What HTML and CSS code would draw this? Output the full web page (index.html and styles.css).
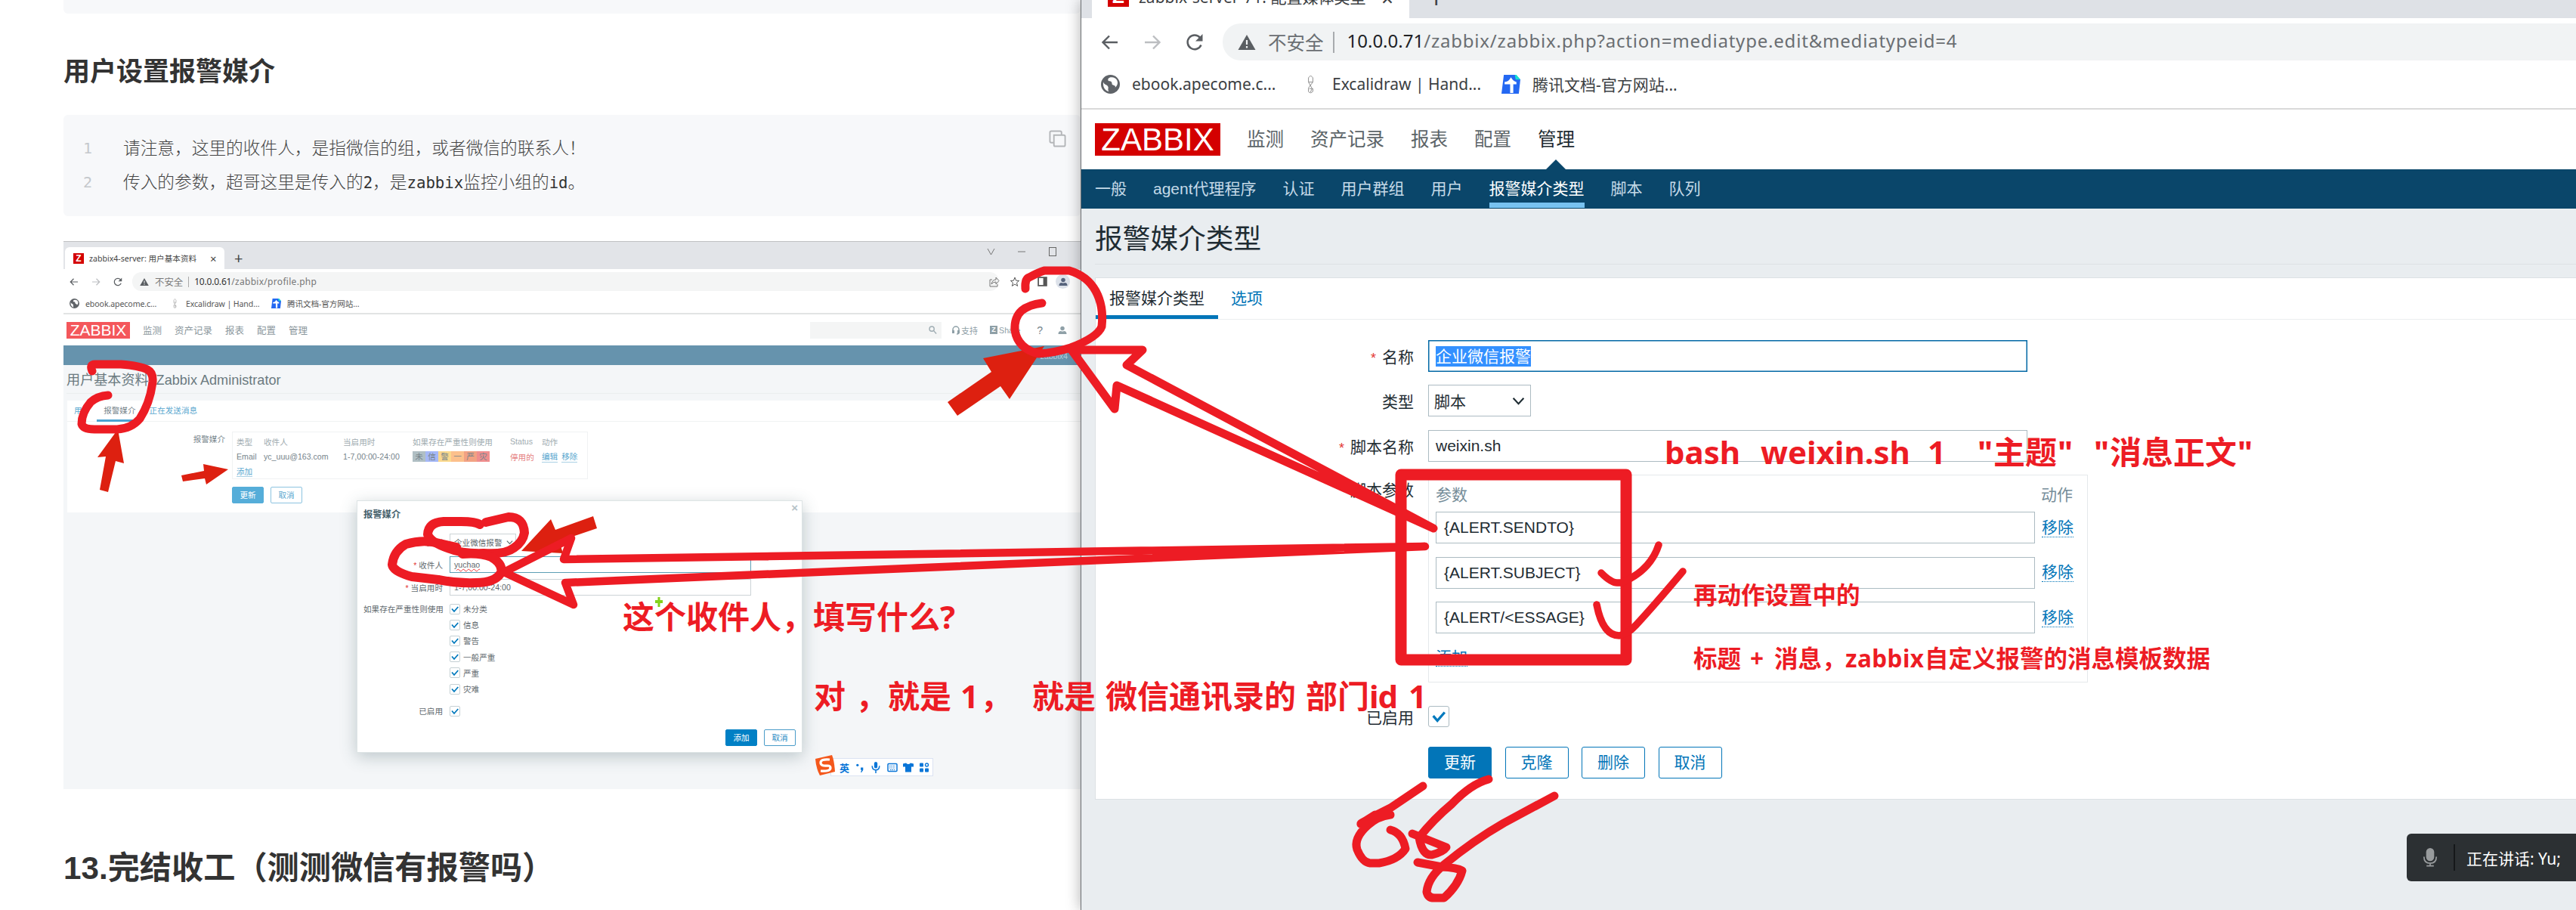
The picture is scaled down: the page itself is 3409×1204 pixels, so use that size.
FILE: index.html
```html
<!DOCTYPE html>
<html lang="zh-CN">
<head>
<meta charset="utf-8">
<title>报警媒介类型</title>
<link rel="stylesheet" href="styles.css">
</head>
<body>
<svg class="defs" width="0" height="0">
  <symbol id="i-back" viewBox="0 0 24 24"><path d="M22 12H3M11 3.5 2.5 12l8.500 8.500" fill="none" stroke="currentColor" stroke-width="2.400"/></symbol>
  <symbol id="i-fwd" viewBox="0 0 24 24"><path d="M2 12h19M13 3.500 21.500 12 13 20.500" fill="none" stroke="currentColor" stroke-width="2.400"/></symbol>
  <symbol id="i-reload" viewBox="0 0 24 24"><path d="M20.500 15.500A9.300 9.300 0 1 1 19 5.800" fill="none" stroke="currentColor" stroke-width="2.500"/><path d="M22.500 1v9.500H13z" fill="currentColor"/></symbol>
  <symbol id="i-warn" viewBox="0 0 24 24"><path d="M12 2 23.500 22H.5z" fill="currentColor"/><path d="M12 9v6M12 17v2.600" stroke="#f1f3f4" stroke-width="2.200"/></symbol>
  <symbol id="i-globe" viewBox="0 0 24 24"><circle cx="12" cy="12" r="12" fill="#5f6368"/><path d="M3 9c1 4 5 3 6 6 1 2-1 3 1 6-5-1-8-6-7-12zM12 3c-3 1-4 3-2 5 3 0 4 1 4 4 2 2 5 1 4 4 4-3 4-8 1-11-2-2-4-2-7-2z" fill="#fff"/></symbol>
  <symbol id="i-pen" viewBox="0 0 12 26"><path d="M6 1 3 4v6l5 9-3 6-2-2V18l6-8V4zM3 10h6M4 19h5v4l-3 2" fill="none" stroke="#8b8b8b" stroke-width="1"/></symbol>
  <symbol id="i-doc" viewBox="0 0 24 24"><path d="M3 0h15l6 6-2 18H0z" fill="#2468f2"/><path d="M17 0h2l5 6h-6z" fill="#18e0d0"/><path d="M4 9q5 0 8-6 3 5 7 6v3h-4v11h-4V12H4z" fill="#fff"/></symbol>
  <symbol id="i-user" viewBox="0 0 24 24"><circle cx="12" cy="7" r="5.500" fill="currentColor"/><path d="M1 22q0-8 7-8 4 2 8 0 7 0 7 8z" fill="currentColor"/></symbol>
  <symbol id="i-tick" viewBox="0 0 24 24"><path d="m4 11 6 7L20.500 6" fill="none" stroke="#0079bd" stroke-width="3.600"/></symbol>
  <symbol id="i-chev" viewBox="0 0 16 16"><path d="m1.500 4.500 6.500 7 6.500-7" fill="none" stroke="currentColor" stroke-width="2"/></symbol>
</svg>

<main class="screen">
  <article class="doc">
    <div class="code code-tail"></div>
    <h2 class="doc-h2">用户设置报警媒介</h2>
    <div class="code">
      <div class="line"><i>1</i><span>请注意，这里的收件人，是指微信的组，或者微信的联系人！</span></div>
      <div class="line"><i>2</i><span>传入的参数，超哥这里是传入的<b>2</b>，是<b>zabbix</b>监控小组的<b>id</b>。</span></div>
      <svg class="copy" viewBox="0 0 24 24"><rect x="1.500" y="1.500" width="16" height="16" rx="2"/><path d="M7 7h13.500q2 0 2 2v11.500q0 2-2 2H9q-2 0-2-2z"/></svg>
    </div>

    <section class="shot">
      <div class="s-strip">
        <div class="s-tab"><span class="zfav">Z</span><span class="s-tabtext">zabbix4-server: 用户基本资料</span><span class="s-x">×</span></div>
        <span class="s-plus">+</span>
        <svg class="s-win" viewBox="0 0 100 16"><path d="m5 4 4.500 8L14 4M45 8h10" fill="none" stroke="#777"/><rect x="86.500" y="2.500" width="9" height="11" fill="none" stroke="#666"/></svg>
      </div>
      <div class="s-bar">
        <svg class="ic12 dk"><use href="#i-back"/></svg>
        <svg class="ic12 lt"><use href="#i-fwd"/></svg>
        <svg class="ic12 dk"><use href="#i-reload"/></svg>
        <div class="s-omni"><svg class="ic12 dk"><use href="#i-warn"/></svg><span class="s-safe">不安全</span><u></u><span class="s-url"><em>10.0.0.61</em>/zabbix/profile.php</span>
          <svg class="s-share" viewBox="0 0 40 14"><path d="M4 4H1v9h10v-3M3 10q1-6 6-6V1l4 4.500L9 10V7Q5 7 3 10z" fill="none" stroke="#777"/><path d="m34 1 1.600 4.200 4 .2-3.100 2.700 1.100 4.300L34 10l-3.600 2.400 1.100-4.300-3.100-2.700 4-.2z" fill="none" stroke="#555"/></svg>
        </div>
        <svg class="s-panel" viewBox="0 0 12 12"><rect x="1" y="1" width="10" height="10" fill="none" stroke="#555" stroke-width="1.600"/><path d="M7 1h4v10H7z" fill="#555"/></svg>
        <span class="s-avatar"><svg class="ic12"><use href="#i-user"/></svg></span>
      </div>
      <div class="s-marks">
        <svg class="ic13"><use href="#i-globe"/></svg><span class="m1">ebook.apecome.c...</span>
        <svg class="ic13"><use href="#i-pen"/></svg><span class="m2">Excalidraw | Hand...</span>
        <svg class="ic13"><use href="#i-doc"/></svg><span>腾讯文档-官方网站...</span>
      </div>
      <div class="s-head">
        <span class="s-logo">ZABBIX</span>
        <nav><a>监测</a><a>资产记录</a><a>报表</a><a>配置</a><a>管理</a></nav>
        <div class="s-search"><svg viewBox="0 0 12 12"><circle cx="4.500" cy="4.500" r="3.400"/><path d="m7 7 4 4.500"/></svg></div>
        <span class="s-sup"><svg viewBox="0 0 12 12"><path d="M2 9V5a4 4 0 0 1 8 0v4q0 2-3 2" fill="none" stroke="#8fa0a7" stroke-width="1.500"/><path d="M1 6h3v4H1zM8 6h3v4H8z" fill="#8fa0a7"/></svg>支持</span>
        <span class="s-shr"><b>Z</b>Share</span>
        <span class="s-q">?</span>
        <svg class="ic12 s-u"><use href="#i-user"/></svg>
      </div>
      <div class="s-band">zabbix4</div>
      <h3 class="s-title">用户基本资料: Zabbix Administrator</h3>
      <div class="s-main">
        <div class="s-tabs"><a>用户</a><a class="on">报警媒介</a><a>正在发送消息</a></div>
        <div class="s-form">
          <label>报警媒介</label>
          <div>
            <div class="s-table">
              <span>类型</span><span>收件人</span><span>当启用时</span><span>如果存在严重性则使用</span><span>Status</span><span>动作</span>
              <p>Email</p><p>yc_uuu@163.com</p><p>1-7,00:00-24:00</p>
              <p class="sev"><i class="v0">未</i><i class="v1">信</i><i class="v2">警</i><i class="v3">一</i><i class="v4">严</i><i class="v5">灾</i></p>
              <p class="red">停用的</p><p class="acts"><a>编辑</a><a>移除</a></p>
              <p><a>添加</a></p>
            </div>
            <div class="s-btns"><span class="fill">更新</span><span>取消</span></div>
          </div>
        </div>
      </div>

      <div class="modal">
        <div class="mo-title">报警媒介<span>×</span></div>
        <div class="mo-row"><label>类型</label><div class="mo-sel">企业微信报警<svg><use href="#i-chev"/></svg></div></div>
        <div class="mo-row"><label><s>*</s> 收件人</label><div class="mo-in focus"><span class="typo">yuchao</span></div></div>
        <div class="mo-row"><label><s>*</s> 当启用时</label><div class="mo-in">1-7,00:00-24:00</div></div>
        <div class="mo-row ck"><label>如果存在严重性则使用</label><span class="box"><svg><use href="#i-tick"/></svg></span>未分类</div>
        <div class="mo-row ck"><label></label><span class="box"><svg><use href="#i-tick"/></svg></span>信息</div>
        <div class="mo-row ck"><label></label><span class="box"><svg><use href="#i-tick"/></svg></span>警告</div>
        <div class="mo-row ck"><label></label><span class="box"><svg><use href="#i-tick"/></svg></span>一般严重</div>
        <div class="mo-row ck"><label></label><span class="box"><svg><use href="#i-tick"/></svg></span>严重</div>
        <div class="mo-row ck"><label></label><span class="box"><svg><use href="#i-tick"/></svg></span>灾难</div>
        <div class="mo-row ck last"><label>已启用</label><span class="box"><svg><use href="#i-tick"/></svg></span></div>
        <div class="mo-btns"><span class="fill">添加</span><span>取消</span></div>
      </div>

      <div class="ime">
        <svg class="ime-s" viewBox="0 0 28 28"><path d="M1 5 23 0q3 7 4 22L7 27Q2 18 1 5z" fill="#f4581c"/><path d="M20 6Q8 5 8 10t9 4q4 0 4 3 0 5-13 4" fill="none" stroke="#fff" stroke-width="3.200"/></svg>
        <span>英</span>
        <svg viewBox="0 0 12 14"><circle cx="3" cy="4" r="1.500"/><path d="M7 7h3v3l-2 3H7l1-3H7z"/></svg>
        <svg viewBox="0 0 12 14"><rect x="4" y="0" width="4" height="8" rx="2"/><path d="M1.500 5q0 5 4.500 5t4.500-5M6 10v4" fill="none" stroke="#0a76d8" stroke-width="1.400"/></svg>
        <svg viewBox="0 0 14 14"><rect x="1" y="2" width="12" height="10" rx="1" fill="none" stroke="#0a76d8" stroke-width="1.500"/><path d="M3 5h8M3 7.500h8M4 10h6" stroke="#0a76d8" stroke-dasharray="1.500 1"/></svg>
        <svg viewBox="0 0 14 14"><path d="M0 2 4 1q3 3 6 0l4 1v4h-3v7H3V6H0z"/></svg>
        <svg viewBox="0 0 14 14"><rect x="1" y="1" width="5" height="5" rx="1"/><circle cx="10.500" cy="3.500" r="2" fill="none" stroke="#0a76d8" stroke-width="1.400"/><rect x="1" y="8" width="5" height="5" rx="1"/><rect x="8" y="8" width="5" height="5" rx="1"/></svg>
      </div>
    </section>

    <h1 class="doc-h1">13.完结收工（测测微信有报警吗）</h1>
  </article>

  <section class="window">
    <div class="w-strip">
      <div class="w-tab"><span class="w-fav">Z</span><span class="w-tabtext">zabbix-server-71: 配置媒体类型</span><span class="w-x">×</span></div>
      <span class="w-plus">+</span>
    </div>
    <div class="w-bar">
      <svg class="ic24 dk"><use href="#i-back"/></svg>
      <svg class="ic24 lt"><use href="#i-fwd"/></svg>
      <svg class="ic24 dk"><use href="#i-reload"/></svg>
      <div class="w-omni"><svg class="ic24 dk"><use href="#i-warn"/></svg><span class="w-safe">不安全</span><u></u><span class="w-url"><em>10.0.0.71</em>/zabbix/zabbix.php?action=mediatype.edit&amp;mediatypeid=4</span></div>
    </div>
    <div class="w-marks">
      <svg class="ic25"><use href="#i-globe"/></svg><span class="n1">ebook.apecome.c...</span>
      <svg class="ic25"><use href="#i-pen"/></svg><span class="n2">Excalidraw | Hand...</span>
      <svg class="ic25"><use href="#i-doc"/></svg><span>腾讯文档-官方网站...</span>
    </div>
    <header class="z-head">
      <span class="z-logo">ZABBIX</span>
      <nav><a>监测</a><a>资产记录</a><a>报表</a><a>配置</a><a class="on">管理</a></nav>
    </header>
    <nav class="z-sub"><a>一般</a><a>agent代理程序</a><a>认证</a><a>用户群组</a><a>用户</a><a class="on">报警媒介类型</a><a>脚本</a><a>队列</a></nav>
    <h1 class="z-title">报警媒介类型</h1>
    <div class="z-panel">
      <div class="z-tabs"><a class="on">报警媒介类型</a><a>选项</a></div>
      <div class="z-form">
        <div class="z-row"><label><s>*</s>名称</label><div class="z-in focus"><mark>企业微信报警</mark></div></div>
        <div class="z-row"><label>类型</label><div class="z-sel">脚本<svg><use href="#i-chev"/></svg></div></div>
        <div class="z-row r3"><label><s>*</s>脚本名称</label><div class="z-in">weixin.sh</div></div>
        <div class="z-row top"><label>脚本参数</label>
          <div class="z-params">
            <div class="p-head"><span>参数</span><span>动作</span></div>
            <div class="p-row"><div class="z-in">{ALERT.SENDTO}</div><a>移除</a></div>
            <div class="p-row"><div class="z-in">{ALERT.SUBJECT}</div><a>移除</a></div>
            <div class="p-row"><div class="z-in">{ALERT/&lt;ESSAGE}</div><a>移除</a></div>
            <div class="p-add"><a>添加</a></div>
          </div>
        </div>
        <div class="z-row en"><label>已启用</label><span class="z-box"><svg><use href="#i-tick"/></svg></span></div>
        <div class="z-btns"><span class="fill">更新</span><span>克隆</span><span>删除</span><span>取消</span></div>
      </div>
    </div>
  </section>

  <div class="speaker">
    <svg viewBox="0 0 20 28"><rect x="4.500" y="1" width="11" height="18" rx="5.500" fill="#989b9d"/><path d="M1.500 13q0 9 8.500 9t8.500-9M10 22v3.500M5 25.500h10" fill="none" stroke="#989b9d" stroke-width="1.800"/></svg>
    <u></u><span>正在讲话: Yu;</span>
  </div>

  <svg class="ink" viewBox="0 0 3409 1204">
    <g class="solid">
      <path d="M156 568 164 613 153 610 143 651 132 648 140 604 129 605z"/>
      <path d="M302 621 269 614 270 623 240 629 242 637 271 633 273 641z"/>
      <path d="M1382 458 1301 474 1312 492 1254 532 1267 550 1324 511 1336 528z"/>
      <path d="M690 729 729 687 735 701 785 683 790 699 740 716 745 732z"/>
    </g>
    <path d="M867 794h3.500v-4h3v4h3.500v4h-3.500v5h-3v-5H867z" fill="#85d21b"/>
    <g class="pen">
      <path stroke-width="11" d="M122 491Q118 482 126 482H160Q185 484 195 489 203 493 202 505 199 532 185 554 174 567 155 568H125Q110 568 108 561 108 546 120 532 129 524 143 523"/>
      <path stroke-width="11" d="M1357 382Q1356 369 1362 367 1373 361 1382 358H1415Q1439 365 1450 385 1461 405 1458 432 1453 446 1417 460 1395 467 1374 468 1347 461 1343 437 1342 420 1352 411 1362 403 1379 401"/>
      <path stroke-width="12" d="M635 694Q629 690 610 690H587Q567 691 566 707 570 718 595 726 612 733 640 732 668 734 680 725 692 717 694 705 693 684 673 684L643 691"/>
      <path stroke-width="12" d="M612 733Q635 731 650 737 666 746 663 758 655 771 630 771 605 772 580 767L545 763Q520 756 519 747 521 729 537 720 560 713 582 719L604 724"/>
      <path stroke-width="10.500" d="M1886 723 746 740 756 712 667 757 759 800 748 771z"/>
      <path stroke-width="11" d="M1897 699 1491 483 1512 463H1418L1475 541 1478 510z"/>
      <rect stroke-width="15" x="1854" y="628" width="298" height="245"/>
      <path stroke-width="9.500" d="M2119 758Q2132 771 2140 771H2146Q2184 755 2195 721"/>
      <path stroke-width="9.500" d="M2113 800Q2121 841 2143 841 2155 838 2165 827 2190 800 2227 756"/>
      <path stroke-width="11" d="M1883 1040 1840 1069Q1798 1090 1801 1090L1820 1078H1840Q1823 1080 1810 1092 1791 1109 1796 1124 1803 1141 1813 1142H1825Q1850 1138 1860 1123 1856 1102 1840 1098"/>
      <path stroke-width="11" d="M1970 1031Q1947 1037 1921 1064 1897 1084 1878 1108 1882 1132 1895 1131 1910 1127 1914 1121L1869 1103"/>
      <path stroke-width="11" d="M2057 1053 1990 1089Q1950 1112 1911 1144 1890 1161 1888 1180 1890 1189 1900 1188H1911Q1930 1171 1935 1152 1928 1148 1908 1147L1876 1141"/>
    </g>
    <g class="note">
      <text y="832" font-size="42"><tspan x="824" textLength="252">这个收件人，</tspan><tspan x="1076">填写什么</tspan><tspan x="1244">?</tspan></text>
      <text y="937" font-size="42"><tspan x="1077">对</tspan><tspan x="1132">，</tspan><tspan x="1175">就是</tspan><tspan x="1271">1</tspan><tspan x="1297">，</tspan><tspan x="1366">就是</tspan><tspan x="1463">微信通讯录的</tspan><tspan x="1728">部门</tspan><tspan x="1812" textLength="38">id</tspan><tspan x="1864">1</tspan></text>
      <text y="614" font-size="42"><tspan x="2203">bash</tspan><tspan x="2330">weixin.sh</tspan><tspan x="2551">1</tspan><tspan x="2617">"</tspan><tspan x="2638">主题</tspan><tspan x="2723">"</tspan><tspan x="2771">"</tspan><tspan x="2792">消息正文</tspan><tspan x="2961">"</tspan></text>
      <text y="799" font-size="31.500" x="2241">再动作设置中的</text>
      <text y="883" font-size="31.500"><tspan x="2241">标题</tspan><tspan x="2316">+</tspan><tspan x="2348">消息，</tspan><tspan x="2442" textLength="104">zabbix</tspan><tspan x="2547">自定义报警的消息模板数据</tspan></text>
    </g>
  </svg>
</main>
</body>
</html>
```
FILE: styles.css
```css
* { box-sizing: border-box; margin: 0; padding: 0; }
body { width: 3409px; height: 1204px; overflow: hidden; background: #fff; font-family: "Liberation Sans", "Noto Sans CJK SC", sans-serif; white-space: nowrap; }
i, em { font-style: normal; }
u, s { text-decoration: none; }
.defs { position: absolute; }
svg { flex: none; }
.screen { position: relative; display: flex; height: 1204px; overflow: hidden; }
.dk { color: #5a5e62; }
.lt { color: #bcbec1; }

/* document on the left */
.doc { width: 1430px; flex: none; padding-left: 84px; overflow: hidden; }
.code { position: relative; height: 134px; padding: 22px 0 0 26px; background: #f7f8fa; border-radius: 6px; }
.code-tail { height: 18px; padding: 0; border-radius: 0 0 6px 6px; }
.doc-h2 { height: 134px; padding: 49px 0 0; font: bold 35px/50px "Noto Sans CJK SC", sans-serif; color: #333; }
.line { display: flex; height: 45px; line-height: 45px; font-family: "DejaVu Sans Mono", "Noto Sans CJK SC", monospace; font-size: 22.7px; color: #444; font-weight: 300; }
.line i { width: 53px; font-size: 20px; color: #c5c8cc; }
.line b { font-size: 20.7px; font-weight: 400; color: #333; }
.copy { position: absolute; left: 1304px; top: 20px; width: 23px; height: 23px; fill: #f7f8fa; stroke: #b4b6b9; stroke-width: 2; }
.doc-h1 { height: 160px; padding: 75px 0 0; font: bold 42.2px/60px "Liberation Sans", "Noto Sans CJK SC", sans-serif; color: #333; }

/* browser capture inside the document */
.shot { position: relative; margin-top: 33px; height: 725px; border-top: 1px solid #bfc1c3; background: #f4f6f8; font-size: 10.6px; color: #77858c; }
.ic12 { width: 12px; height: 12px; }
.ic13 { width: 13px; height: 13px; }
.s-strip { display: flex; align-items: flex-end; height: 36px; padding-left: 2px; background: #e2e4e8; font-family: "Noto Sans", "Noto Sans CJK SC", sans-serif; color: #444; }
.s-tab { display: flex; align-items: center; width: 211px; height: 29px; padding-left: 11px; border-radius: 6px 6px 0 0; background: #fff; }
.zfav { width: 14px; height: 14px; background: #d40000; color: #fff; font: bold 12px/14px "Liberation Sans", sans-serif; text-align: center; }
.s-tabtext { width: 143px; margin-left: 7px; }
.s-x { margin-left: 17px; font-size: 15px; }
.s-plus { margin-left: 13px; font-size: 20px; line-height: 28px; }
.s-win { width: 100px; height: 16px; margin: 0 28px 15px auto; }
.s-bar { display: flex; align-items: center; height: 33px; padding: 0 0 0 8px; gap: 17px; background: #fff; }
.s-omni { display: flex; flex: none; align-items: center; width: 1147px; height: 25px; margin-left: -4px; padding-left: 10px; border-radius: 12px; background: #f4f5f5; font-family: "Noto Sans", "Noto Sans CJK SC", sans-serif; font-size: 12px; color: #777; }
.s-safe { margin-left: 8px; font-size: 12.4px; }
.s-omni u { width: 1px; height: 14px; margin: 0 7px; background: #aaa; }
.s-omni em { color: #333; letter-spacing: -.2px; }
.s-url { letter-spacing: .3px; }
.s-share { width: 40px; height: 14px; margin: 0 -29px 0 auto; position: relative; left: -1px; transform: translateX(-1px); }
.s-panel { width: 13px; height: 13px; margin-left: 34px; }
.s-avatar { display: flex; align-items: center; justify-content: center; width: 19px; height: 19px; margin-left: -6px; border-radius: 50%; background: #dde2ea; color: #56637c; }
.s-marks { display: flex; align-items: center; height: 25px; padding-left: 8px; background: #fff; font-family: "Noto Sans", "Noto Sans CJK SC", sans-serif; color: #555; letter-spacing: -.1px; }
.s-marks span { margin-left: 8px; }
.s-marks .m1 { width: 112px; }
.s-marks .m2 { width: 113px; }
.s-head { display: flex; align-items: center; height: 43px; padding-left: 4px; border-top: 2px solid #e2e4e4; background: #fff; }
.s-head, .s-marks { flex: none; }
.s-logo { width: 84px; height: 22px; background: #f4575b; color: #fff; font-size: 21px; line-height: 22px; text-align: center; }
.s-head nav { display: flex; gap: 17px; margin-left: 17px; font-size: 12.5px; color: #8b979d; }
.s-search { display: flex; align-items: center; justify-content: flex-end; width: 174px; height: 22px; margin-left: 665px; padding-right: 6px; background: #f4f5f5; }
.s-search svg { width: 11px; height: 11px; fill: none; stroke: #9fadb3; stroke-width: 1.5; }
.s-sup { display: flex; align-items: center; margin-left: 13px; font-size: 11px; gap: 1px; color: #8fa0a7; }
.s-sup svg { width: 12px; height: 12px; }
.s-shr { display: flex; align-items: center; margin-left: 16px; gap: 2px; color: #8fa0a7; }
.s-shr b { width: 10px; height: 11px; background: #8fa0a7; color: #fff; font-size: 9px; line-height: 11px; text-align: center; }
.s-q { width: 8px; margin-left: 22px; font-size: 14px; }
.s-u { margin-left: 20px; color: #8fa0a7; }
.s-band { height: 26px; padding-right: 17px; background: #6693ad; color: #b4cbd8; text-align: right; line-height: 28px; }
.s-title { height: 38px; margin-left: 4px; border-bottom: 1px solid #eaeeee; font-size: 18.1px; line-height: 41px; font-weight: 400; color: #6b7a80; }
.s-main { height: 148px; margin: 9px 0 0 5px; background: #fff; }
.s-tabs { display: flex; gap: 0; height: 28px; border-bottom: 1px solid #f0f2f2; line-height: 27px; }
.s-tabs a { padding: 0 9px; color: #5ba8cf; }
.s-tabs .on { height: 28px; border-bottom: 3px solid #4ba3d3; color: #77858c; }
.s-form { display: flex; padding-top: 13px; }
.s-form label { width: 209px; margin-right: 9px; text-align: right; line-height: 20px; }
.s-table { display: grid; grid-template-columns: 36px 105px 92px 129px 42px 60px; grid-template-rows: 20px 20px 19px; align-items: center; width: 471px; height: 63px; padding: 2px 0 0 5px; border: 1px solid #f0f2f3; }
.s-table span { color: #a0abb0; }
.s-table a { color: #5ba8cf; border-bottom: 1px solid #a9d0e4; }
.sev { display: flex; width: 102px; height: 14px; line-height: 14px; }
.sev i { width: 17px; text-align: center; }
.v0 { background: #b0bfc4; } .v1 { background: #a5b8f7; } .v2 { background: #fbd98d; } .v3 { background: #fcc08c; } .v4 { background: #f2a283; } .v5 { background: #f08e8e; }
.red { color: #e58080; }
.acts { display: flex; gap: 5px; }
.s-btns, .mo-btns { display: flex; gap: 9px; margin-top: 10px; }
.s-btns span, .mo-btns span { width: 42px; height: 22px; border: 1px solid #8cc3e0; border-radius: 2px; line-height: 20px; text-align: center; color: #5ba8cf; background: #fff; }
.s-btns .fill { background: #55add9; border-color: #55add9; color: #fff; }

.modal { position: absolute; left: 388px; top: 342px; width: 590px; height: 334px; padding-left: 8px; border: 1px solid #dde4e5; background: #fff; box-shadow: 0 5px 20px rgba(60, 90, 95, .3); color: #5f696e; }
.mo-title { display: flex; justify-content: space-between; height: 39px; padding: 0 5px 0 0; font-weight: bold; font-size: 12.3px; line-height: 37px; color: #45606b; }
.mo-title span { font-size: 15px; line-height: 17px; color: #b5c2c7; }
.mo-row { display: flex; align-items: center; height: 30px; }
.mo-row label { width: 105px; margin-right: 9px; text-align: right; }
.mo-row s, .z-row s { color: #e33734; }
.mo-in, .mo-sel { display: flex; align-items: center; width: 399px; height: 22px; padding-left: 5px; border: 1px solid #ccd3d6; }
.mo-in.focus { border-color: #5d9fb5; }
.mo-sel { width: 88px; justify-content: space-between; padding-right: 3px; }
.mo-sel svg { width: 9px; height: 9px; }
.typo { text-decoration: underline wavy #e33 1px; }
.mo-row.ck { height: 21.2px; }
.mo-row.ck:nth-child(5) { margin-top: 3px; }
.box { width: 14px; height: 14px; margin-right: 4px; border: 1px solid #c5d0d4; border-radius: 2px; }
.box svg { display: block; width: 12px; height: 12px; }
.mo-row.last { margin-top: 8px; }
.mo-btns { justify-content: flex-end; margin-top: 14px; padding-right: 8px; }
.mo-btns span { border-color: #4a9cc9; color: #2b8dc4; }
.mo-btns .fill { background: #0080c5; border-color: #0080c5; color: #fff; }

.ime { position: absolute; left: 1015px; top: 683px; width: 136px; height: 24px; display: flex; align-items: center; justify-content: space-between; padding: 0 4px 0 11px; border: 1px solid #dbe3f2; background: #fff; color: #0a76d8; font-weight: bold; font-size: 13px; }
.ime svg { width: 14px; height: 15px; fill: #0a76d8; }
.ime .ime-s { position: absolute; left: -22px; top: -5px; width: 28px; height: 28px; }

/* browser window on the right */
.window { position: relative; flex: 1; min-width: 0; border-left: 1px solid #6b6f73; background: #e9edf0; box-shadow: 0 0 18px rgba(0, 0, 0, .32); font-size: 21px; color: #1f2c33; }
.ic24 { width: 24px; height: 24px; }
.ic25 { width: 25px; height: 25px; }
.w-strip { display: flex; height: 24px; padding-left: 14px; overflow: hidden; background: #dee1e6; font-family: "Noto Sans", "Noto Sans CJK SC", sans-serif; color: #3c4043; }
.w-tab { display: flex; width: 420px; height: 24px; padding-left: 21px; background: #fff; border-radius: 0 0 10px 10px; box-shadow: 0 12px #fff; }
.w-fav { width: 28px; height: 28px; margin-top: -19px; background: #d40000; color: #fff; font: bold 26px/28px "Liberation Sans", sans-serif; text-align: center; }
.w-tabtext { width: 309px; margin: -19px 0 0 13px; line-height: 30px; }
.w-x { margin: -20px 0 0 12px; font-size: 28px; line-height: 35px; }
.w-plus { margin: -20px 0 0 26px; font-size: 34px; line-height: 37px; }
.w-bar { display: flex; align-items: center; height: 63px; padding-left: 26px; gap: 32px; background: #fff; }
.w-omni { display: flex; align-items: center; flex: 1; height: 49px; margin-left: -7px; padding-left: 20px; border-radius: 24px 0 0 24px; background: #f1f3f4; font-family: "Noto Sans", "Noto Sans CJK SC", sans-serif; font-size: 24px; color: #6a6e72; }
.w-safe { margin-left: 16px; font-size: 24.5px; }
.w-omni u { width: 2px; height: 28px; margin: 0 17px 0 12px; background: #a8abae; }
.w-omni em { color: #202124; letter-spacing: 0; }
.w-url { letter-spacing: .8px; line-height: 46px; padding-bottom: 3px; }
.w-marks { display: flex; align-items: center; height: 58px; padding: 0 0 8px 26px; border-bottom: 2px solid #dadada; background: #fff; font-family: "Noto Sans", "Noto Sans CJK SC", sans-serif; color: #3c4043; }
.w-marks span { margin-left: 16px; }
.w-marks .n1 { width: 224px; }
.w-marks .n2 { width: 224px; }
.z-head { display: flex; align-items: center; height: 79px; padding-left: 18px; background: #fff; }
.z-logo { width: 166px; height: 43px; background: #d40000; color: #fff; font-size: 42px; line-height: 44px; text-align: center; }
.z-head nav { display: flex; gap: 35px; margin-left: 35px; font-size: 24.5px; line-height: 79px; color: #5c6468; }
.z-head .on { position: relative; color: #1f2c33; }
.z-head .on::after { content: ""; position: absolute; left: 11px; bottom: 0; border: 13.5px solid transparent; border-top: 0; border-bottom: 13px solid #0a466a; }
.z-sub { display: flex; gap: 35px; height: 52px; padding-left: 18px; background: #0a466a; line-height: 51px; color: #c5dae8; }
.z-sub .on { height: 51px; border-bottom: 7px solid #78c2f0; color: #fff; }
.z-title { height: 74px; margin-left: 18px; border-bottom: 1px solid #dce1e4; font-size: 36.7px; font-weight: 400; line-height: 82px; }
.z-panel { height: 691px; margin: 17px 0 0 18px; border: 1px solid #dce1e4; border-right: 0; background: #fff; }
.z-tabs { display: flex; height: 55px; border-bottom: 1px solid #ebeef0; line-height: 54px; }
.z-tabs a { padding: 0 17px; color: #0275b8; }
.z-tabs .on { height: 54px; padding: 0 18px; border-bottom: 5px solid #0275b8; color: #1f2c33; }
.z-form { padding-top: 27px; }
.z-row { display: flex; align-items: center; height: 42px; margin-bottom: 17px; }
.z-row label { width: 421px; margin-right: 19px; text-align: right; }
.z-row s { margin-right: 8px; font-size: 18px; }
.z-in, .z-sel { display: flex; align-items: center; width: 793px; height: 42px; padding-left: 9px; border: 1px solid #acbbc2; background: #fff; }
.z-in.focus { border: 1px solid #0268a5; box-shadow: inset 0 0 0 .5px #0268a5; }
mark { height: 27px; line-height: 27px; background: #3390ff; color: #fff; }
.z-sel { width: 136px; padding: 0 7px; justify-content: space-between; }
.z-sel svg { width: 17px; height: 17px; }
.z-row.r3 { margin-top: 18px; }
.z-row.top { align-items: flex-start; height: 275px; margin-bottom: 31px; }
.z-row.top label { line-height: 42px; }
.z-params { width: 873px; height: 275px; padding: 10px 0 0 9px; border: 1px solid #e5e9eb; }
.p-head { display: flex; justify-content: space-between; height: 38px; padding-right: 19px; line-height: 32px; color: #768d99; }
.p-row { display: flex; align-items: center; gap: 9px; height: 42px; margin-bottom: 17.5px; }
.p-row .z-in { padding-left: 10px; }
.p-row a, .p-add a { line-height: 24px; border-bottom: 1px dotted #0275b8; color: #0275b8; }
.p-add { padding-top: 2px; }
.z-row.en { height: 28px; margin-bottom: 26px; }
.z-box { width: 28px; height: 28px; border: 1px solid #acbbc2; border-radius: 3px; }
.z-box svg { display: block; width: 22px; height: 22px; margin: 2px; }
.z-btns { display: flex; gap: 17.5px; padding-left: 440px; }
.z-btns span { width: 84px; height: 42px; border: 1px solid #0275b8; border-radius: 3px; line-height: 40px; text-align: center; color: #0275b8; }
.z-btns .fill { background: #0275b8; color: #fff; }

/* floating speaker badge */
.speaker { position: absolute; left: 3185px; top: 1103px; display: flex; align-items: center; width: 224px; height: 63px; padding-left: 21px; border-radius: 6px 0 0 6px; background: #2c3033; color: #fff; font: 21px "Noto Sans", "Noto Sans CJK SC", sans-serif; }
.speaker svg { width: 20px; height: 27px; }
.speaker u { width: 2px; height: 35px; margin: 0 15px 0 21px; background: #15181a; }

/* hand-drawn annotations */
.ink { position: absolute; left: 0; top: 0; width: 3409px; height: 1204px; }
.solid { fill: #dd2010; }
.pen { fill: none; stroke: #ed1c24; stroke-linecap: round; stroke-linejoin: round; }
.note { fill: #ed1c24; font-family: "Noto Sans", "Noto Sans CJK SC", sans-serif; font-weight: bold; }
```
